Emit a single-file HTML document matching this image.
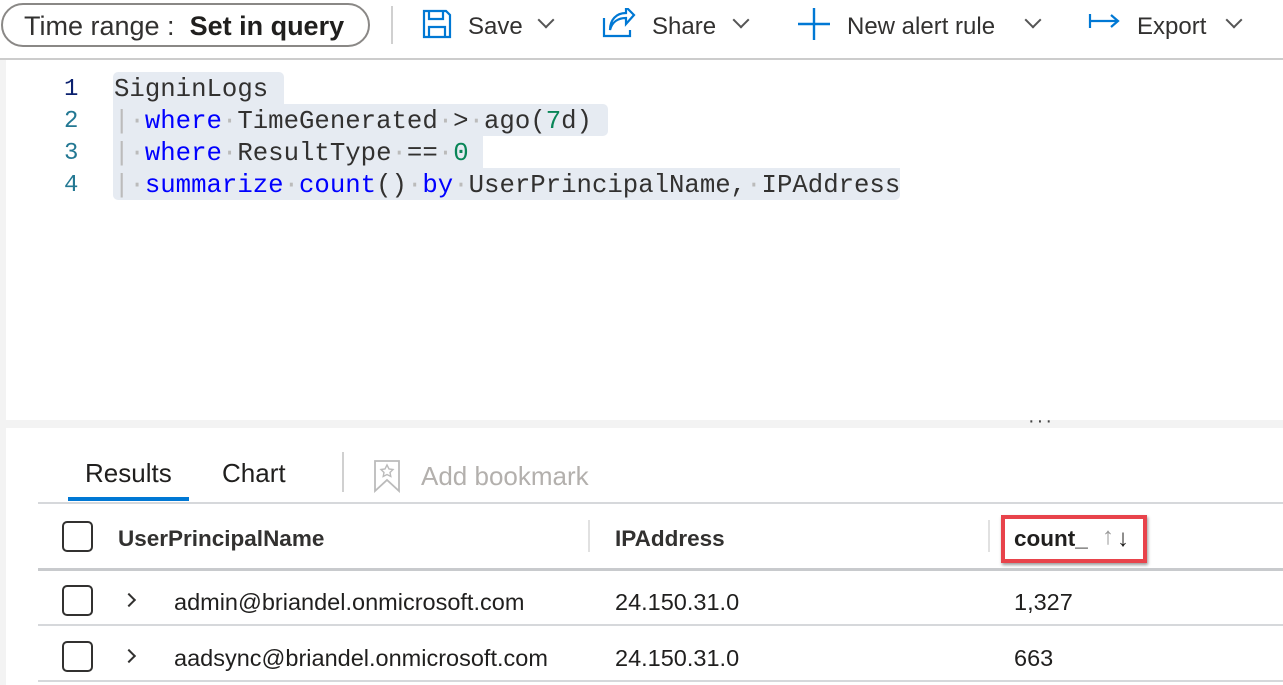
<!DOCTYPE html>
<html><head><meta charset="utf-8"><style>
*{margin:0;padding:0;box-sizing:border-box}
body{width:1283px;height:685px;overflow:hidden;background:#fff;position:relative;font-family:"Liberation Sans",sans-serif;color:#323130}
.a{position:absolute;white-space:nowrap}
.tb{font-size:24px;top:13px;color:#323130}
.chev{position:absolute;width:12px;height:12px;border-right:2px solid #555;border-bottom:2px solid #555;transform:rotate(45deg)}
.code{font-family:"Liberation Mono",monospace;font-size:25.7px}
.hl{position:absolute;background:#e6ebf2;height:32px}
.ln{position:absolute;font-family:"Liberation Mono",monospace;font-size:24px;color:#237893;left:64px}
.k{color:#0000ff}.n{color:#098658}.d{color:#bbb}
.cb{position:absolute;width:31px;height:31px;border:2px solid #323130;border-radius:5px}
.hr{position:absolute;left:38px;right:0;height:2px;background:#d6d8db}
.td{font-size:23.5px;color:#201f1e}
.th{font-size:22.5px;font-weight:bold;color:#323130}
</style></head><body>
<div class="a" style="left:1px;top:3px;width:369px;height:44px;border:2px solid #8a8886;border-radius:22px"></div>
<div class="a" style="left:24px;top:11px;font-size:27px;color:#323130">Time range :&nbsp; <b style="color:#201f1e">Set in query</b></div>
<div class="a" style="left:391px;top:6px;width:2px;height:38px;background:#d0d0d0"></div>
<svg class="a" style="left:422px;top:9px" width="30" height="30" viewBox="0 0 30 30"><path d="M2 2h22l4 4v22H2z M7 2v8h14V2 M7 28V18h16v10" fill="none" stroke="#0078d4" stroke-width="2.2"/></svg>
<div class="a tb" style="left:468px">Save</div><div class="chev" style="left:540px;top:14px"></div>
<svg class="a" style="left:602px;top:8px" width="34" height="30" viewBox="0 0 34 30"><path d="M2 10v18h26v-6 M8 22c2-8 8-12 16-12v6l8-9-8-8v6C14 5 8 12 8 22z" fill="none" stroke="#0078d4" stroke-width="2.2"/></svg>
<div class="a tb" style="left:652px">Share</div><div class="chev" style="left:735px;top:14px"></div>
<svg class="a" style="left:797px;top:7px" width="34" height="34"><path d="M17 1v32M1 17h32" stroke="#0078d4" stroke-width="2.4"/></svg>
<div class="a tb" style="left:847px">New alert rule</div><div class="chev" style="left:1027px;top:14px"></div>
<svg class="a" style="left:1088px;top:12px" width="34" height="20"><path d="M2 2v14M2 9h28M23 3l7 6-7 6" fill="none" stroke="#0078d4" stroke-width="2.2"/></svg>
<div class="a tb" style="left:1137px">Export</div><div class="chev" style="left:1228px;top:14px"></div>
<div class="a" style="left:0;top:58px;width:1283px;height:2px;background:#ccc"></div>
<div class="a" style="left:0;top:60px;width:6px;height:625px;background:#f3f3f3"></div>
<div class="hl" style="left:113px;top:72px;width:171px;border-radius:5px 5px 0 0"></div>
<div class="hl" style="left:113px;top:104px;width:495px;border-radius:0 5px 5px 0"></div>
<div class="hl" style="left:113px;top:136px;width:370px"></div>
<div class="hl" style="left:113px;top:168px;width:787px;border-radius:0 0 5px 5px"></div>
<div class="ln" style="top:76px;color:#0b216f">1</div>
<div class="ln" style="top:108px">2</div>
<div class="ln" style="top:140px">3</div>
<div class="ln" style="top:172px">4</div>
<div class="a code" style="left:114px;top:75px">SigninLogs</div>
<div class="a code" style="left:114px;top:107px"><span class="d">|</span><span class="d">·</span><span class="k">where</span><span class="d">·</span>TimeGenerated<span class="d">·</span>&gt;<span class="d">·</span>ago(<span class="n">7</span>d)</div>
<div class="a code" style="left:114px;top:139px"><span class="d">|</span><span class="d">·</span><span class="k">where</span><span class="d">·</span>ResultType<span class="d">·</span>==<span class="d">·</span><span class="n">0</span></div>
<div class="a code" style="left:114px;top:171px"><span class="d">|</span><span class="d">·</span><span class="k">summarize</span><span class="d">·</span><span class="k">count</span>()<span class="d">·</span><span class="k">by</span><span class="d">·</span>UserPrincipalName,<span class="d">·</span>IPAddress</div>
<div class="a" style="left:6px;top:420px;width:1277px;height:8px;background:#f3f3f3"></div>
<div class="a" style="left:1028px;top:410px;font-size:20px;color:#444;letter-spacing:2px">···</div>
<div class="a" style="left:85px;top:458px;font-size:26px;color:#201f1e">Results</div>
<div class="a" style="left:68px;top:497px;width:121px;height:4px;background:#0078d4"></div>
<div class="a" style="left:222px;top:458px;font-size:26px;color:#201f1e">Chart</div>
<div class="a" style="left:342px;top:452px;width:2px;height:40px;background:#d0d0d0"></div>
<svg class="a" style="left:373px;top:459px" width="30" height="34" viewBox="0 0 30 34"><path d="M2 2h24v30l-12-11L2 32z" fill="none" stroke="#bbb" stroke-width="1.8"/><path d="M14 6l2 4 4 .5-3 3 .8 4-3.8-2-3.8 2 .8-4-3-3 4-.5z" fill="none" stroke="#bbb" stroke-width="1.4"/></svg>
<div class="a" style="left:421px;top:461px;font-size:26px;color:#b3b0ad">Add bookmark</div>
<div class="hr" style="top:502px"></div>
<div class="cb" style="left:62px;top:521px"></div>
<div class="a th" style="left:118px;top:526px">UserPrincipalName</div>
<div class="a" style="left:588px;top:520px;width:2px;height:32px;background:#e1e1e1"></div>
<div class="a th" style="left:615px;top:526px">IPAddress</div>
<div class="a" style="left:988px;top:520px;width:2px;height:32px;background:#e1e1e1"></div>
<div class="a" style="left:1001px;top:515px;width:146px;height:48px;border:4px solid #e8434b;box-shadow:1px 2px 3px rgba(0,0,0,.4)"></div>
<div class="a th" style="left:1014px;top:526px;color:#201f1e">count_</div>
<div class="a" style="left:1102px;top:523px;font-size:24px;color:#999">↑</div>
<div class="a" style="left:1117px;top:525px;font-size:24px;color:#201f1e">↓</div>
<div class="hr" style="top:568px;height:3px;background:#c8cacd"></div>
<div class="cb" style="left:62px;top:585px"></div>
<div class="chev" style="left:124px;top:595px;transform:rotate(-45deg);width:10px;height:10px;border-color:#323130"></div>
<div class="a td" style="left:174px;top:589px">admin@briandel.onmicrosoft.com</div>
<div class="a td" style="left:615px;top:589px">24.150.31.0</div>
<div class="a td" style="left:1014px;top:589px">1,327</div>
<div class="hr" style="top:624px"></div>
<div class="cb" style="left:62px;top:641px"></div>
<div class="chev" style="left:124px;top:651px;transform:rotate(-45deg);width:10px;height:10px;border-color:#323130"></div>
<div class="a td" style="left:174px;top:645px">aadsync@briandel.onmicrosoft.com</div>
<div class="a td" style="left:615px;top:645px">24.150.31.0</div>
<div class="a td" style="left:1014px;top:645px">663</div>
<div class="hr" style="top:680px"></div>
</body></html>
